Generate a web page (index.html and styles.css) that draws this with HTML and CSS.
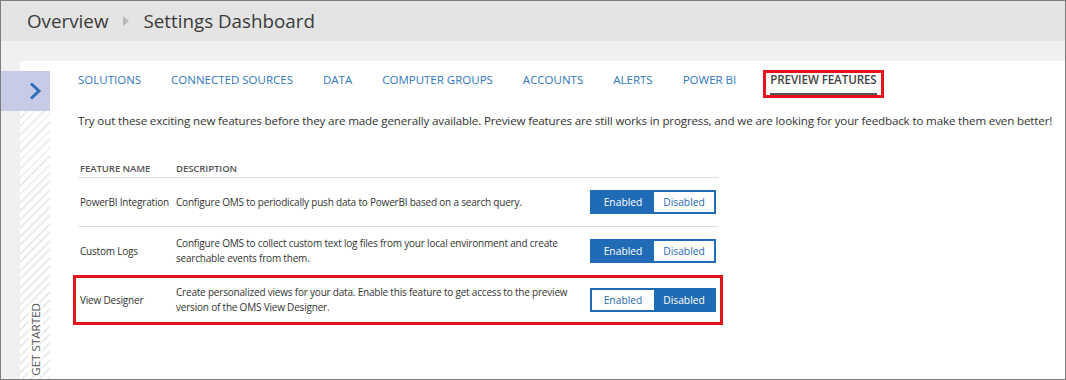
FILE: index.html
```html
<!DOCTYPE html>
<html lang="en">

<head>
    <meta charset="UTF-8">
    <title>Settings Dashboard</title>
    <link rel="stylesheet" href="styles.css">
</head>

<body>
    <div class="frame">
        <div class="header">
            <span class="crumb">Overview</span>
            <span class="crumb-arrow"></span>
            <span class="crumb">Settings Dashboard</span>
        </div>

        <div class="workspace">
            <div class="panel">
                <div class="rail">
                    <div class="rail-tab">
                        <svg width="14" height="18" viewBox="0 0 14 18">
                            <polyline points="3,1.5 11,9 3,16.5" fill="none" stroke="#2f6db5" stroke-width="3" />
                        </svg>
                    </div>
                    <div class="rail-stripes">
                        <span class="rail-label">GET STARTED</span>
                    </div>
                </div>

                <div class="content">
                    <div class="tabs">
                        <span class="tab">SOLUTIONS</span>
                        <span class="tab">CONNECTED SOURCES</span>
                        <span class="tab">DATA</span>
                        <span class="tab">COMPUTER GROUPS</span>
                        <span class="tab">ACCOUNTS</span>
                        <span class="tab">ALERTS</span>
                        <span class="tab">POWER BI</span>
                        <span class="tab active">PREVIEW FEATURES</span>
                    </div>

                    <p class="intro">Try out these exciting new features before they are made generally available. Preview features are still works in progress, and we are looking for your feedback to make them even better!</p>

                    <div class="features">
                        <div class="feature-head">
                            <span>FEATURE NAME</span>
                            <span>DESCRIPTION</span>
                            <span></span>
                        </div>

                        <div class="feature-row">
                            <span class="name">PowerBI Integration</span>
                            <span class="desc">Configure OMS to periodically push data to PowerBI based on a search query.</span>
                            <div class="switch">
                                <span class="on">Enabled</span>
                                <span>Disabled</span>
                            </div>
                        </div>

                        <div class="feature-row">
                            <span class="name">Custom Logs</span>
                            <span class="desc">Configure OMS to collect custom text log files from your local environment and create searchable events from them.</span>
                            <div class="switch">
                                <span class="on">Enabled</span>
                                <span>Disabled</span>
                            </div>
                        </div>

                        <div class="feature-row marked">
                            <span class="name">View Designer</span>
                            <span class="desc">Create personalized views for your data. Enable this feature to get access to the preview version of the OMS View Designer.</span>
                            <div class="switch">
                                <span>Enabled</span>
                                <span class="on">Disabled</span>
                            </div>
                        </div>
                    </div>
                </div>
            </div>
        </div>
    </div>
</body>

</html>
```

FILE: styles.css
```css
* {
    box-sizing: border-box;
}

body {
    margin: 0;
    background: white;
    font-family: "Open Sans", "Noto Sans", sans-serif;
    color: #333;
}

.frame {
    width: 1066px;
    height: 380px;
    border: 1px solid #7d7d7d;
    display: flex;
    flex-direction: column;
    overflow: hidden;
}

.header {
    height: 40px;
    background: #e4e4e4;
    padding-left: 26px;
    display: flex;
    align-items: center;
    gap: 14px;
}

.crumb {
    font-size: 18.8px;
    color: #3a3a3a;
}

.crumb-arrow {
    width: 0;
    height: 0;
    border-top: 5px solid transparent;
    border-bottom: 5px solid transparent;
    border-left: 6px solid #b8b8b8;
    margin-left: 1px;
}

.workspace {
    flex: 1;
    background: #f0f0f0;
    padding: 20px 0 0 19px;
    display: flex;
}

.panel {
    flex: 1;
    background: white;
    display: flex;
}

.rail {
    width: 30px;
    display: flex;
    flex-direction: column;
}

.rail-tab {
    margin: 10px 0 0 -19px;
    width: 49px;
    height: 40px;
    background: #c7cbe7;
    display: flex;
    align-items: center;
    justify-content: flex-end;
    padding-right: 8px;
}

.rail-stripes {
    flex: 1;
    background: repeating-linear-gradient(135deg, #fff 0 4px, #ececec 4px 6px);
    display: flex;
    flex-direction: column;
    justify-content: flex-end;
    align-items: center;
    padding-bottom: 3px;
}

.rail-label {
    writing-mode: vertical-rl;
    transform: rotate(180deg);
    font-size: 11.6px;
    color: #555;
    background: rgba(255, 255, 255, 0.6);
}

.content {
    flex: 1;
    padding-left: 28px;
}

.tabs {
    display: flex;
    gap: 30px;
    padding-top: 11px;
}

.tab {
    font-size: 11.5px;
    line-height: 16px;
    color: #2e78c0;
    padding-bottom: 5px;
    border-bottom: 3px solid transparent;
}

.tab.active {
    position: relative;
    margin-left: 4px;
    font-weight: 600;
    font-size: 11.6px;
    letter-spacing: -0.1px;
    color: #444;
    border-bottom-color: #555;
}

.tab.active::after {
    content: "";
    position: absolute;
    top: -2px;
    bottom: -5px;
    left: -7px;
    right: -7px;
    border: 3px solid #e3141b;
}

.intro {
    margin: 16px 0 0;
    font-size: 11.6px;
    letter-spacing: -0.15px;
    line-height: 18px;
    white-space: nowrap;
}

.features {
    width: 640px;
    margin-top: 31px;
}

.feature-head,
.feature-row {
    display: grid;
    grid-template-columns: 98px 1fr 128px;
    align-items: center;
    border-bottom: 1px solid #ddd;
    font-size: 10px;
    letter-spacing: -0.2px;
}

.feature-head {
    line-height: 16px;
    font-weight: 600;
    font-size: 9.6px;
    letter-spacing: -0.1px;
    color: #555;
}

.feature-head span:first-child,
.feature-row .name {
    padding-left: 2px;
}

.feature-row {
    height: 49px;
    line-height: 15px;
}

.desc {
    padding-right: 16px;
}

.feature-row.marked {
    position: relative;
    border-bottom-color: transparent;
}

.feature-row.marked::after {
    content: "";
    position: absolute;
    top: -1px;
    bottom: -1px;
    left: -5px;
    right: -5px;
    border: 3px solid #e3141b;
}

.switch {
    display: flex;
    width: 126px;
    height: 24px;
    border: 2px solid #1f6bb5;
}

.switch span {
    flex: 1;
    display: flex;
    align-items: center;
    justify-content: center;
    color: #1f6bb5;
    font-size: 10.3px;
    letter-spacing: 0;
}

.switch span:first-child {
    flex: 0 0 62px;
}

.switch .on {
    background: #1f6bb5;
    color: white;
}
```
